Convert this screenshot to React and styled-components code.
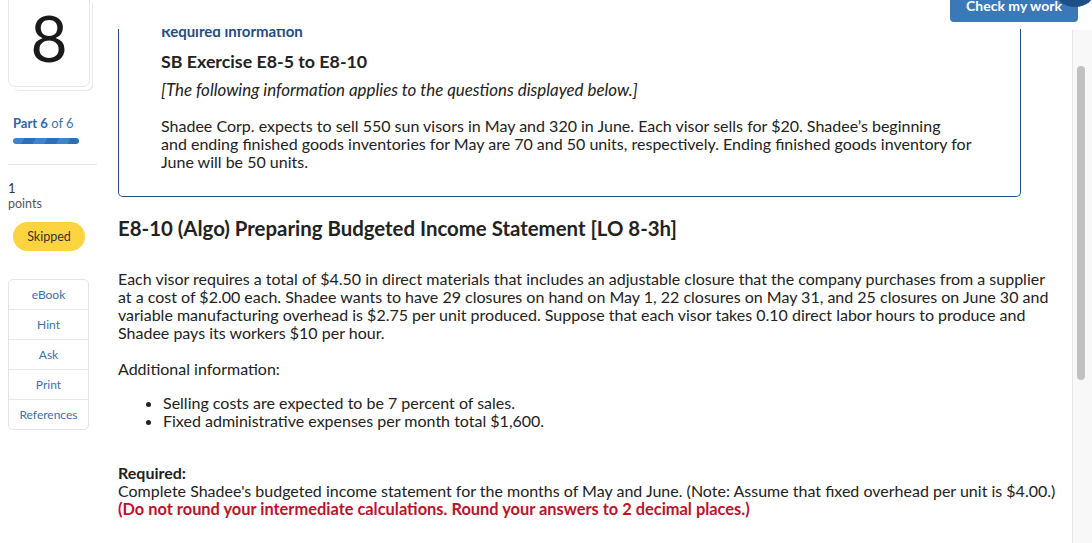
import React from "react";
import styled, { createGlobalStyle } from "styled-components";

const GlobalStyle = createGlobalStyle`
	html, body {
		margin: 0;
		padding: 0;
		height: 543px;
		overflow: hidden;
		background: #fff;
		font-family: "Lato", "Open Sans", sans-serif;
		color: #222;
	}
`;

const tools = ["eBook", "Hint", "Ask", "Print", "References"];

const App = () => {
	return (
		<>
			<GlobalStyle />
			<Page>
				<Sidebar>
					<NumberCard>
						<span>8</span>
					</NumberCard>
					<PartLabel>
						<b>Part 6</b> of 6
					</PartLabel>
					<Progress />
					<Divider />
					<Points>
						<div className="value">1</div>
						<div className="label">points</div>
					</Points>
					<Skipped>Skipped</Skipped>
					<ToolList>
						{tools.map((tool) => (
							<ToolItem key={tool}>{tool}</ToolItem>
						))}
					</ToolList>
				</Sidebar>

				<Main>
					<TopBar>
						<CheckButton>Check my work</CheckButton>
						<Badge />
					</TopBar>
					<Scroller>
						<Content>
							<InfoBox>
								<InfoTag>Required information</InfoTag>
								<InfoTitle>SB Exercise E8-5 to E8-10</InfoTitle>
								<InfoNote>
									[The following information applies to the questions displayed below.]
								</InfoNote>
								<Text $top={17}>
									Shadee Corp. expects to sell 550 sun visors in May and 320 in June. Each visor sells for $20. Shadee’s beginning
									<br />
									and ending finished goods inventories for May are 70 and 50 units, respectively. Ending finished goods inventory for
									<br />
									June will be 50 units.
								</Text>
							</InfoBox>

							<Heading>E8-10 (Algo) Preparing Budgeted Income Statement [LO 8-3h]</Heading>

							<Text $top={0}>
								Each visor requires a total of $4.50 in direct materials that includes an adjustable closure that the company purchases from a supplier
								<br />
								at a cost of $2.00 each. Shadee wants to have 29 closures on hand on May 1, 22 closures on May 31, and 25 closures on June 30 and
								<br />
								variable manufacturing overhead is $2.75 per unit produced. Suppose that each visor takes 0.10 direct labor hours to produce and
								<br />
								Shadee pays its workers $10 per hour.
							</Text>

							<Text $top={18}>Additional information:</Text>

							<Bullets>
								<li>Selling costs are expected to be 7 percent of sales.</li>
								<li>Fixed administrative expenses per month total $1,600.</li>
							</Bullets>

							<Text $top={34}>
								<b>Required:</b>
								<br />
								Complete Shadee's budgeted income statement for the months of May and June. (Note: Assume that fixed overhead per unit is $4.00.)
								<br />
								<Warning>
									(Do not round your intermediate calculations. Round your answers to 2 decimal places.)
								</Warning>
							</Text>
						</Content>
						<ScrollTrack>
							<ScrollThumb />
						</ScrollTrack>
					</Scroller>
				</Main>
			</Page>
		</>
	);
};

const Page = styled.div`
	display: flex;
	height: 543px;
	overflow: hidden;
`;

const Sidebar = styled.aside`
	width: 89px;
	flex-shrink: 0;
	padding-left: 8px;
	display: flex;
	flex-direction: column;
	align-items: flex-start;
`;

const NumberCard = styled.div`
	width: 82px;
	height: 90px;
	margin-top: -3px;
	box-sizing: border-box;
	border: 1px solid #e6e6e6;
	border-radius: 0 0 7px 7px;
	background: #fff;
	box-shadow: 3px 4px 0 -1px #fff, 4px 5px 0 -1px #e9e9e9;
	display: flex;
	justify-content: center;
	align-items: flex-start;

	span {
		font-family: "Lato", sans-serif;
		font-weight: 400;
		font-size: 64px;
		line-height: 64px;
		margin-top: 8px;
		color: #1a1a1a;
	}
`;

const PartLabel = styled.div`
	margin-top: 29px;
	margin-left: 5px;
	font-size: 13px;
	line-height: 14px;
	color: #3b73b9;

	b {
		font-weight: 700;
		color: #2b67ad;
	}
`;

const Progress = styled.div`
	margin: 8px 0 0 5px;
	width: 66px;
	height: 6px;
	border-radius: 3px;
	background: repeating-linear-gradient(
		120deg,
		#3a86cc 0 10px,
		#2a70b5 10px 20px
	);
`;

const Divider = styled.div`
	margin-top: 20px;
	width: 89px;
	height: 1px;
	background: #e6e6e6;
`;

const Points = styled.div`
	margin-top: 16px;
	color: #333;

	.value {
		font-size: 13px;
		line-height: 15px;
	}

	.label {
		font-size: 12.5px;
		line-height: 15px;
		color: #555;
	}
`;

const Skipped = styled.div`
	margin: 11px 0 0 5px;
	width: 72px;
	height: 29px;
	border-radius: 15px;
	background: #fdd43f;
	font-size: 12.5px;
	color: #333;
	display: flex;
	align-items: center;
	justify-content: center;
`;

const ToolList = styled.ul`
	list-style: none;
	margin: 28px 0 0;
	padding: 0;
	width: 81px;
	box-sizing: border-box;
	border: 1px solid #e4e4e4;
	border-radius: 5px;
`;

const ToolItem = styled.li`
	height: 29px;
	display: flex;
	align-items: center;
	justify-content: center;
	font-size: 12px;
	color: #3b6fb5;
	border-top: 1px solid #e8e8e8;

	&:first-child {
		border-top: none;
	}
`;

const Main = styled.main`
	flex: 1;
	position: relative;
	display: flex;
	flex-direction: column;
`;

const TopBar = styled.div`
	height: 29px;
	flex-shrink: 0;
	background: #fff;
	position: relative;
	z-index: 2;
`;

const CheckButton = styled.button`
	position: absolute;
	top: 0;
	left: 853px;
	width: 128px;
	height: 22px;
	margin: 0;
	padding: 0 0 4px;
	border: none;
	border-radius: 0 0 4px 4px;
	background: #3a78b8;
	color: #fff;
	font-family: "Lato", sans-serif;
	font-weight: 700;
	font-size: 14px;
	line-height: 12px;
	display: flex;
	align-items: flex-start;
	justify-content: center;
`;

const Badge = styled.div`
	position: absolute;
	top: -26px;
	left: 958px;
	width: 40px;
	height: 33px;
	border-radius: 50%;
	background: #1d4e85;
`;

const Scroller = styled.div`
	flex: 1;
	display: flex;
	overflow: hidden;
`;

const Content = styled.div`
	flex: 1;
	padding: 0 0 0 21px;
	margin-top: -7px;
`;

const InfoBox = styled.section`
	width: 903px;
	box-sizing: border-box;
	border: 1px solid #1f4f88;
	border-top: none;
	border-radius: 0 0 5px 5px;
	padding: 0 0 25px 42px;
`;

const InfoTag = styled.div`
	font-weight: 700;
	font-size: 15px;
	line-height: 18px;
	color: #1f4e84;
`;

const InfoTitle = styled.h2`
	margin: 10px 0 0;
	font-weight: 700;
	font-size: 17.8px;
	line-height: 22px;
	color: #222;
`;

const InfoNote = styled.p`
	margin: 8px 0 0;
	font-style: italic;
	font-size: 16.9px;
	line-height: 20px;
`;

const Text = styled.p`
	margin: ${(p) => p.$top ?? 18}px 0 0;
	font-size: 16px;
	line-height: 18px;
	white-space: nowrap;

	b {
		font-weight: 700;
	}
`;

const Heading = styled.h1`
	margin: 19px 0 30px;
	font-weight: 700;
	font-size: 20.4px;
	line-height: 24px;
	color: #222;
`;

const Bullets = styled.ul`
	margin: 16px 0 0;
	padding-left: 45px;
	font-size: 16px;
	line-height: 18px;
`;

const Warning = styled.b`
	font-size: 16.4px;
	color: #c3102a;
`;

const ScrollTrack = styled.div`
	width: 19px;
	flex-shrink: 0;
	margin-top: 1px;
	background: #f8f8f8;
	border-left: 1px solid #e6e6e6;
	position: relative;
`;

const ScrollThumb = styled.div`
	position: absolute;
	top: 36px;
	left: 4px;
	width: 8px;
	height: 314px;
	border-radius: 4px;
	background: #c1c1c1;
`;

export default App;
